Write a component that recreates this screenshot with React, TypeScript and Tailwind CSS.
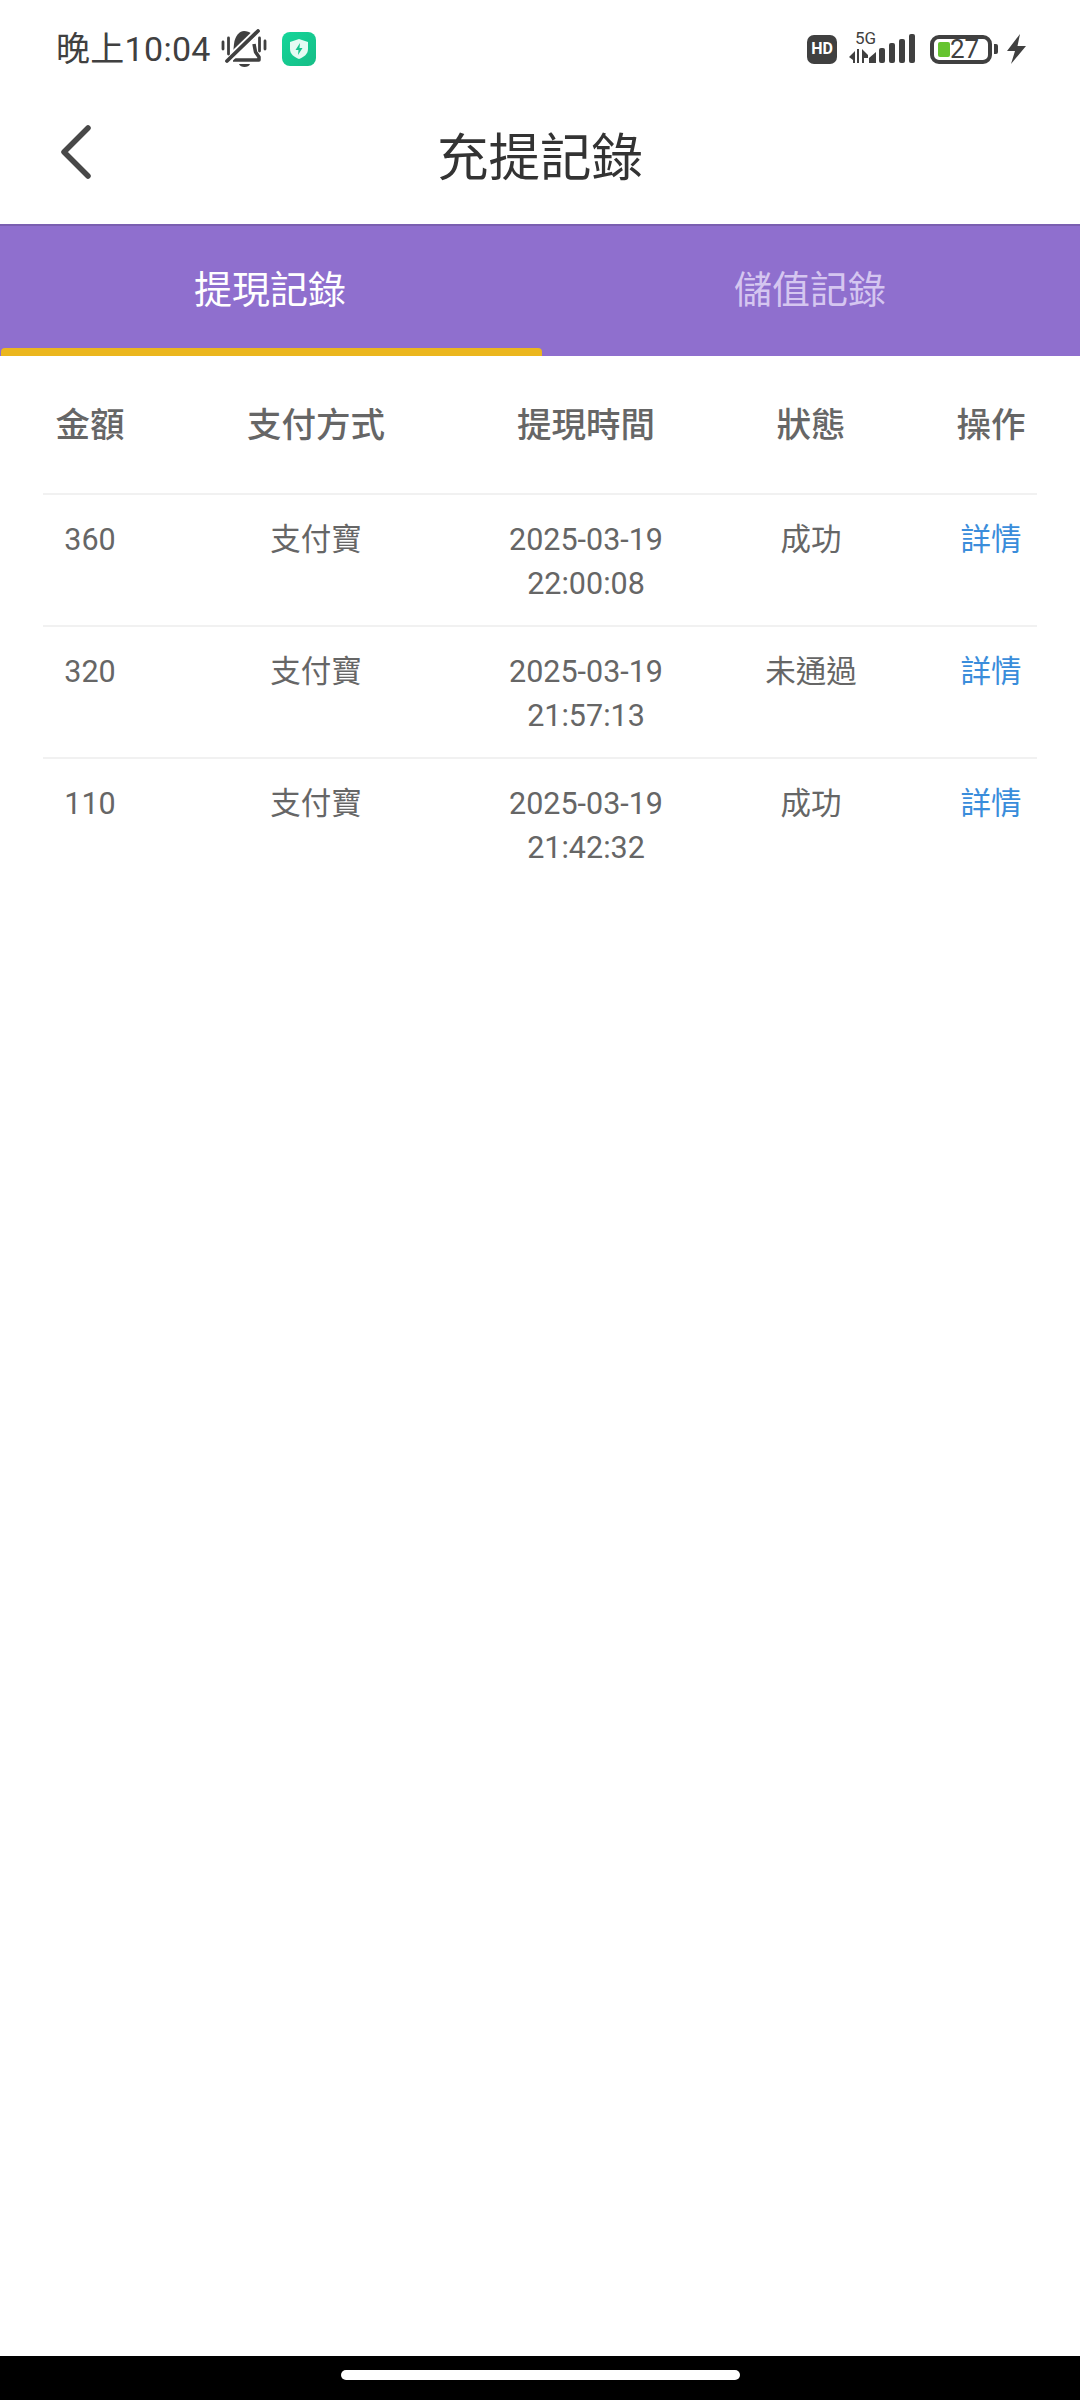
import React from "react";

const font = "font-['Roboto','Noto_Sans_CJK_TC',sans-serif]";

const records = [
  { amount: "360", method: "支付寶", date: "2025-03-19", time: "22:00:08", status: "成功" },
  { amount: "320", method: "支付寶", date: "2025-03-19", time: "21:57:13", status: "未通過" },
  { amount: "110", method: "支付寶", date: "2025-03-19", time: "21:42:32", status: "成功" },
];

const columns = "grid grid-cols-[94px_358px_182px_268px_92px]";

function MutedBell() {
  return (
    <svg width="46" height="40" viewBox="0 0 46 40" fill="none" className="ml-[10px]">
      <path d="M12 25 L13 15 C14 6 19 2 23 2 C29 2 33 6 34 10 L12 25Z" fill="#404040" />
      <path d="M33 15 L34.500 23 L38 28 L38 31 L12 31" stroke="#404040" strokeWidth="3.500" strokeLinejoin="round" />
      <path d="M18 35 H29 C28 39 19 39 18 35Z" fill="#404040" />
      <path d="M6 32 L37 2" stroke="#ffffff" strokeWidth="7.500" />
      <path d="M6 32 L37 2" stroke="#404040" strokeWidth="3.800" strokeLinecap="round" />
      <path d="M2 13 V20 M7.500 9 V25 M38.500 9 V22 M44 12 V20" stroke="#404040" strokeWidth="2.800" strokeLinecap="round" />
    </svg>
  );
}

function ShieldBadge() {
  return (
    <div className="ml-[15px] flex h-[34px] w-[34px] items-center justify-center rounded-[8px] bg-gradient-to-br from-[#15d69a] to-[#16bd86]">
      <svg width="20" height="22" viewBox="0 0 20 22">
        <path d="M10 1 L19 4 V11 C19 16 15 19 10 21 C5 19 1 16 1 11 V4Z" fill="#e6fbf3" />
        <path d="M11 5 L6.500 12 H9.500 L9 17 L13.500 10 H10.500Z" fill="#16c48d" />
      </svg>
    </div>
  );
}

function SignalIcon() {
  return (
    <div className="relative ml-[12px] h-[30px] w-[66px]">
      <span className="absolute left-[6px] top-[-5px] text-[17px] leading-[18px] text-[#404040]">5G</span>
      <svg width="66" height="30" viewBox="0 0 66 30" className="absolute left-0 top-0">
        <path d="M0 23 L6 17 V29 H4 V26Z M8 15 H10 V29 H8Z M13 15 L19 21 V24 H15 V29 H13Z" fill="#404040" />
        <path d="M20 29 V24 L27 18 V29Z" fill="#404040" />
        <rect x="30" y="14" width="6" height="15" rx="2" fill="#404040" />
        <rect x="40" y="9" width="6" height="20" rx="2" fill="#404040" />
        <rect x="50" y="5" width="6" height="24" rx="2" fill="#404040" />
        <rect x="60" y="0" width="6" height="29" rx="2" fill="#404040" />
      </svg>
    </div>
  );
}

function Battery() {
  return (
    <div className="ml-[15px] flex items-center">
      <div className="flex h-[29px] w-[62px] items-center rounded-[9px] border-[4px] border-[#404040] pl-[4px]">
        <div className="h-[15px] w-[12px] rounded-[2px] bg-[#66c430]" />
        <span className="text-[26px] leading-[21px] text-[#404040]">27</span>
      </div>
      <div className="ml-[2px] h-[10px] w-[4px] rounded-r-[2px] bg-[#404040]" />
    </div>
  );
}

function StatusBar() {
  return (
    <div className="flex h-[88px] items-center pl-[56px] pr-[54px] pt-[10px] text-[#404040]">
      <span className="text-[34px] leading-[40px] tracking-[0.3px]">晚上10:04</span>
      <MutedBell />
      <ShieldBadge />
      <div className="ml-auto flex items-center">
        <div className="flex h-[29px] w-[30px] items-center justify-center rounded-[7px] bg-[#404040] text-[16px] font-bold leading-none text-white">
          HD
        </div>
        <SignalIcon />
        <Battery />
        <svg width="20" height="30" viewBox="0 0 20 30" className="ml-[8px]">
          <path d="M14 0 L1 17 H9 L5 30 L20 12 H11.500Z" fill="#404040" />
        </svg>
      </div>
    </div>
  );
}

function Tab({ label, active }: { label: string; active?: boolean }) {
  return (
    <div className="flex w-[540px] flex-col">
      <div className={`flex flex-1 items-center justify-center pt-[6px] text-[38px] ${active ? "text-white" : "text-[#d5c6f0]"}`}>
        {label}
      </div>
      <div className={`ml-[1px] h-[8px] w-[541px] rounded-t-[4px] ${active ? "bg-[#ebb61e]" : ""}`} />
    </div>
  );
}

export default function App() {
  return (
    <div className={`${font} flex h-[2400px] w-[1080px] flex-col bg-white`}>
      <StatusBar />

      <div className="relative flex h-[136px] items-center justify-center pt-[6px]">
        <svg width="34" height="54" viewBox="0 0 34 54" fill="none" className="absolute left-[59px] top-[37px]">
          <path d="M29 3 L5 27 L29 51" stroke="#484848" strokeWidth="5.500" strokeLinecap="round" strokeLinejoin="round" />
        </svg>
        <h1 className="text-[51.500px] leading-[60px] text-[#333333]">充提記錄</h1>
      </div>

      <div className="flex h-[132px] border-t-[2px] border-[#7a5fb0] bg-[#8f6fce]">
        <Tab label="提現記錄" active />
        <Tab label="儲值記錄" />
      </div>

      <div className="mx-[43px] flex-1">
        <div className={`${columns} h-[139px] items-center border-b-[2px] border-[#f1f1f1] text-center text-[34.500px] font-medium leading-[40px] text-[#666666]`}>
          <div>金額</div>
          <div>支付方式</div>
          <div>提現時間</div>
          <div>狀態</div>
          <div>操作</div>
        </div>
        {records.map((r, i) => (
          <div
            key={i}
            className={`${columns} h-[132px] border-b-[2px] border-[#f1f1f1] pt-[23px] text-center text-[30.500px] leading-[44px] text-[#666666] last:border-b-0`}
          >
            <div>{r.amount}</div>
            <div>{r.method}</div>
            <div>
              {r.date}
              <br />
              {r.time}
            </div>
            <div>{r.status}</div>
            <div className="text-[#3a8ddb]">詳情</div>
          </div>
        ))}
      </div>

      <div className="flex h-[44px] items-start justify-center bg-black pt-[14px]">
        <div className="h-[10px] w-[399px] rounded-full bg-white" />
      </div>
    </div>
  );
}
